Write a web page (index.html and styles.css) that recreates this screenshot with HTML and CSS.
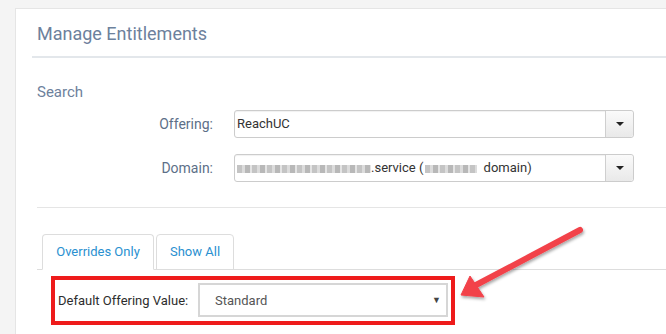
FILE: index.html
```html
<!DOCTYPE html>
<html lang = "en">

<head>
  <meta charset = "UTF-8">
  <meta name = "viewport" content = "width=device-width, initial-scale=1.0">
  <title> Manage Entitlements </title>
  <link rel = "stylesheet" href = "styles.css">
</head>

<body>

  <div class = "page">
    <div class = "card">

      <div class = "card-head">
        <h1> Manage Entitlements </h1>
      </div>

      <div class = "section">
        <h2> Search </h2>

        <div class = "form">
          <label class = "label"> Offering: </label>
          <div class = "combo">
            <span class = "combo-text"> ReachUC </span>
            <span class = "combo-btn"><span class = "caret"></span></span>
          </div>

          <label class = "label"> Domain: </label>
          <div class = "combo">
            <span class = "combo-text"><span class = "blur b1"></span>.service (<span class = "blur b2"></span> domain)</span>
            <span class = "combo-btn"><span class = "caret"></span></span>
          </div>
        </div>

        <div class = "tabs-area">
          <div class = "tabs">
            <div class = "tab active"> Overrides Only </div>
            <div class = "tab"> Show All </div>
          </div>

          <div class = "highlight">
            <span class = "field-label"> Default Offering Value: </span>
            <div class = "select">
              <span> Standard </span>
              <span class = "select-caret"> &#9660; </span>
            </div>
          </div>
        </div>
      </div>

    </div>
  </div>

  <svg class = "annotation" width = "666" height = "334" viewBox = "0 0 666 334">
    <defs>
      <filter id = "shadow" x = "-20%" y = "-20%" width = "140%" height = "140%">
        <feDropShadow dx = "1" dy = "2" stdDeviation = "1.6" flood-color = "#000" flood-opacity = "0.35"/>
      </filter>
    </defs>
    <g filter = "url(#shadow)" fill = "#f2424a" stroke = "#f2424a">
      <line x1 = "580" y1 = "230" x2 = "476" y2 = "285" stroke-width = "6" stroke-linecap = "round"/>
      <polygon points = "461,295 470,276 484,297" stroke-width = "1" stroke-linejoin = "round"/>
    </g>
  </svg>

</body>

</html>
```

FILE: styles.css
```css
*
    {
    margin: 0;
    padding: 0;
    box-sizing: border-box;
    }

:root
    {
    --bg: #f4f4f4;
    --wht: #ffffff;
    --line: #e5e5e5;
    --slate: #6d819c;
    --lbl: #5d6f88;
    --txt: #333333;
    --blu: #2a90d0;
    --red: #ee1b1b;
    }

body
    {
    height: 334px;
    overflow: hidden;
    background-color: var(--bg);
    font-family: Roboto, "Liberation Sans", sans-serif;
    color: var(--txt);
    }

.page
    {
    padding: 8px 0 0 15px;
    }

.card
    {
    height: 326px;
    background-color: var(--wht);
    border: 1px solid var(--line);
    border-right: none;
    border-bottom: none;
    }

.card-head
    {
    margin-left: 16px;
    padding: 14px 0 11px 5px;
    border-bottom: 2px solid #e3e7eb;
    }

.card-head h1
    {
    font-size: 18px;
    line-height: 22px;
    font-weight: 400;
    color: var(--slate);
    }

.section
    {
    padding-left: 21px;
    }

.section h2
    {
    margin-top: 25px;
    font-size: 15px;
    line-height: 18px;
    font-weight: 400;
    color: var(--slate);
    }

.form
    {
    display: grid;
    grid-template-columns: 176px 400px;
    column-gap: 21px;
    row-gap: 16px;
    margin-top: 9px;
    align-items: center;
    }

.label
    {
    text-align: right;
    font-size: 14px;
    color: var(--lbl);
    }

.combo
    {
    display: flex;
    height: 28px;
    border: 1px solid #cccccc;
    border-radius: 3px;
    box-shadow: inset 0 1px 1px rgba(0, 0, 0, 0.06);
    }

.combo-text
    {
    flex: 1;
    padding-left: 2px;
    font-size: 13px;
    line-height: 26px;
    color: var(--txt);
    white-space: nowrap;
    overflow: hidden;
    }

/* obscured part of the domain name */
.blur
    {
    display: inline-block;
    height: 8px;
    vertical-align: -1px;
    background: repeating-linear-gradient(90deg, #c4c4c4 0 5px, #dcdcdc 5px 8px, #b8b8b8 8px 13px, #e4e4e4 13px 15px);
    filter: blur(0.7px);
    }

.b1
    {
    width: 134px;
    }

.b2
    {
    width: 52px;
    margin: 0 3px 0 2px;
    }

.combo-btn
    {
    display: flex;
    justify-content: center;
    align-items: center;
    width: 28px;
    border-left: 1px solid #cfcfcf;
    border-radius: 0 3px 3px 0;
    background: linear-gradient(#fafafa, #e9e9e9);
    }

.caret
    {
    width: 0;
    height: 0;
    border-left: 4px solid transparent;
    border-right: 4px solid transparent;
    border-top: 4px solid #222222;
    }

.tabs-area
    {
    margin-top: 25px;
    padding-top: 26px;
    border-top: 1px solid var(--line);
    }

.tabs
    {
    display: flex;
    gap: 2px;
    padding-left: 5px;
    border-bottom: 1px solid #dddddd;
    }

.tab
    {
    height: 36px;
    margin-bottom: -1px;
    border: 1px solid #dddddd;
    border-radius: 4px 4px 0 0;
    font-size: 13px;
    line-height: 34px;
    text-align: center;
    white-space: nowrap;
    color: var(--blu);
    }

.tab.active
    {
    width: 112px;
    border-bottom-color: var(--wht);
    }

.tab:not(.active)
    {
    width: 78px;
    }

.highlight
    {
    display: flex;
    align-items: center;
    gap: 10px;
    width: 404px;
    height: 49px;
    margin: 6px 0 0 14px;
    padding: 3px 3px 4px 3px;
    border: 4px solid var(--red);
    }

.field-label
    {
    width: 130px;
    font-size: 13px;
    color: #2d2d2d;
    white-space: nowrap;
    }

.select
    {
    display: flex;
    justify-content: space-between;
    align-items: center;
    flex: 1;
    height: 34px;
    padding: 0 5px 0 15px;
    border: 2px solid #d6d6d6;
    font-size: 13px;
    color: #555555;
    }

.select-caret
    {
    font-size: 9px;
    color: #444444;
    }

.annotation
    {
    position: absolute;
    top: 0;
    left: 0;
    pointer-events: none;
    }
```
